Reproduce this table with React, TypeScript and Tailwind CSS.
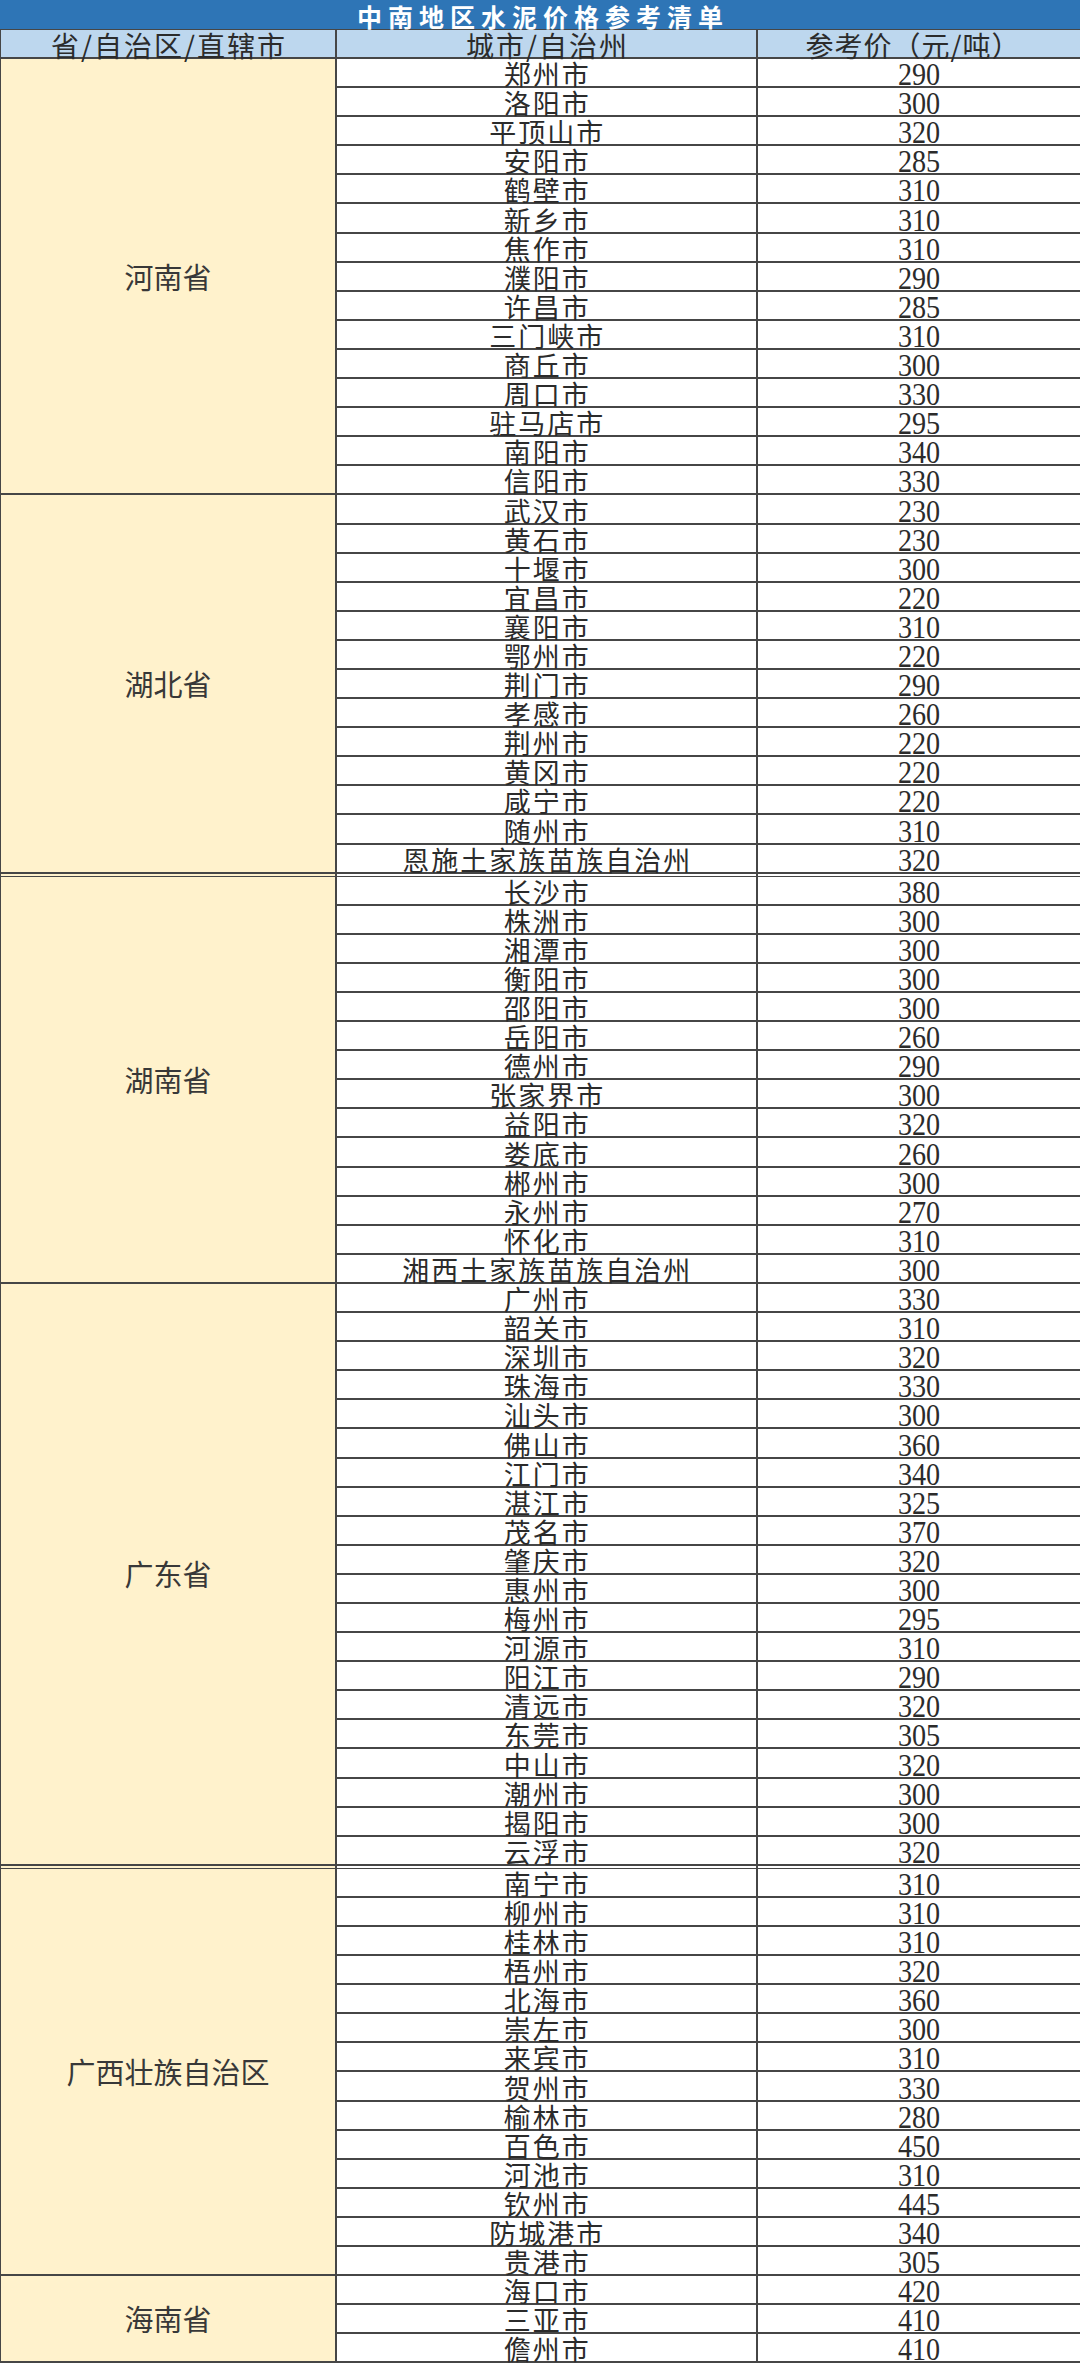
const LINE = "border-[#464646]";

type Section = {
  name: string;
  double?: boolean;
  rows: [string, number][];
};

const sections: Section[] = [
  {
    name: "河南省",
    rows: [
      ["郑州市", 290],
      ["洛阳市", 300],
      ["平顶山市", 320],
      ["安阳市", 285],
      ["鹤壁市", 310],
      ["新乡市", 310],
      ["焦作市", 310],
      ["濮阳市", 290],
      ["许昌市", 285],
      ["三门峡市", 310],
      ["商丘市", 300],
      ["周口市", 330],
      ["驻马店市", 295],
      ["南阳市", 340],
      ["信阳市", 330],
    ],
  },
  {
    name: "湖北省",
    rows: [
      ["武汉市", 230],
      ["黄石市", 230],
      ["十堰市", 300],
      ["宜昌市", 220],
      ["襄阳市", 310],
      ["鄂州市", 220],
      ["荆门市", 290],
      ["孝感市", 260],
      ["荆州市", 220],
      ["黄冈市", 220],
      ["咸宁市", 220],
      ["随州市", 310],
      ["恩施土家族苗族自治州", 320],
    ],
  },
  {
    name: "湖南省",
    double: true,
    rows: [
      ["长沙市", 380],
      ["株洲市", 300],
      ["湘潭市", 300],
      ["衡阳市", 300],
      ["邵阳市", 300],
      ["岳阳市", 260],
      ["德州市", 290],
      ["张家界市", 300],
      ["益阳市", 320],
      ["娄底市", 260],
      ["郴州市", 300],
      ["永州市", 270],
      ["怀化市", 310],
      ["湘西土家族苗族自治州", 300],
    ],
  },
  {
    name: "广东省",
    rows: [
      ["广州市", 330],
      ["韶关市", 310],
      ["深圳市", 320],
      ["珠海市", 330],
      ["汕头市", 300],
      ["佛山市", 360],
      ["江门市", 340],
      ["湛江市", 325],
      ["茂名市", 370],
      ["肇庆市", 320],
      ["惠州市", 300],
      ["梅州市", 295],
      ["河源市", 310],
      ["阳江市", 290],
      ["清远市", 320],
      ["东莞市", 305],
      ["中山市", 320],
      ["潮州市", 300],
      ["揭阳市", 300],
      ["云浮市", 320],
    ],
  },
  {
    name: "广西壮族自治区",
    double: true,
    rows: [
      ["南宁市", 310],
      ["柳州市", 310],
      ["桂林市", 310],
      ["梧州市", 320],
      ["北海市", 360],
      ["崇左市", 300],
      ["来宾市", 310],
      ["贺州市", 330],
      ["榆林市", 280],
      ["百色市", 450],
      ["河池市", 310],
      ["钦州市", 445],
      ["防城港市", 340],
      ["贵港市", 305],
    ],
  },
  {
    name: "海南省",
    rows: [
      ["海口市", 420],
      ["三亚市", 410],
      ["儋州市", 410],
    ],
  },
];

const cjk = "font-['Noto_Sans_CJK_SC',sans-serif]";

// thin strip that draws the second line of a double border
const DoubleGap = () => (
  <div className={`flex h-[3px] border-b ${LINE}`}>
    <div className={`w-[337px] border-l border-r-2 ${LINE} bg-[#fff2cc]`} />
    <div className={`w-[421px] border-r-2 ${LINE} bg-white`} />
    <div className="flex-1 bg-white" />
  </div>
);

const Row = ({ city, price }: { city: string; price: number }) => (
  <div className={`flex h-[29.1px] border-b-2 ${LINE}`}>
    <div
      className={`flex w-[421px] items-end justify-center border-r-2 ${LINE}`}
    >
      <span
        className={`${cjk} translate-y-[1px] whitespace-nowrap pl-[1.5px] text-[27px] leading-[26px] tracking-[2px] text-[#2b2b2b]`}
      >
        {city}
      </span>
    </div>
    <div className="flex flex-1 items-end justify-center">
      <span className="inline-block translate-y-[2px] scale-x-[0.88] font-['Liberation_Serif',serif] text-[32px] leading-[27px] text-[#2b2b2b]">
        {price}
      </span>
    </div>
  </div>
);

const ProvinceBlock = ({ section }: { section: Section }) => (
  <>
    {section.double && <DoubleGap />}
    <div className="flex">
      <div
        className={`flex w-[337px] shrink-0 items-center justify-center border-b-2 border-l border-r-2 ${LINE} bg-[#fff2cc]`}
      >
        <span className={`${cjk} text-[29px] leading-none text-[#383838]`}>
          {section.name}
        </span>
      </div>
      <div className="flex flex-1 flex-col">
        {section.rows.map(([city, price]) => (
          <Row key={city} city={city} price={price} />
        ))}
      </div>
    </div>
  </>
);

export default function App() {
  return (
    <div className="w-[1080px] overflow-hidden bg-white">
      {/* title */}
      <div className="flex h-[29px] items-end justify-center bg-[#2e75b6]">
        <span
          className={`${cjk} pl-[6px] text-[25px] font-bold leading-[26px] tracking-[6px] text-white`}
        >
          中南地区水泥价格参考清单
        </span>
      </div>
      {/* header */}
      <div className={`flex h-[30px] border-b-2 border-t ${LINE} bg-[#bdd7ee]`}>
        <div
          className={`flex w-[337px] items-end justify-center border-l border-r-2 ${LINE}`}
        >
          <span
            className={`${cjk} translate-y-[1px] pl-[2px] text-[28px] leading-[26px] tracking-[2px] text-[#2b2b2b]`}
          >
            省/自治区/直辖市
          </span>
        </div>
        <div
          className={`flex w-[421px] items-end justify-center border-r-2 ${LINE}`}
        >
          <span
            className={`${cjk} translate-y-[1px] pl-[2px] text-[28px] leading-[26px] tracking-[2px] text-[#2b2b2b]`}
          >
            城市/自治州
          </span>
        </div>
        <div className="flex flex-1 items-end justify-center pr-[12px]">
          <span
            className={`${cjk} translate-y-[1px] text-[28px] leading-[26px] tracking-[1px] text-[#2b2b2b]`}
          >
            参考价（元/吨）
          </span>
        </div>
      </div>
      {sections.map((s) => (
        <ProvinceBlock key={s.name} section={s} />
      ))}
    </div>
  );
}
